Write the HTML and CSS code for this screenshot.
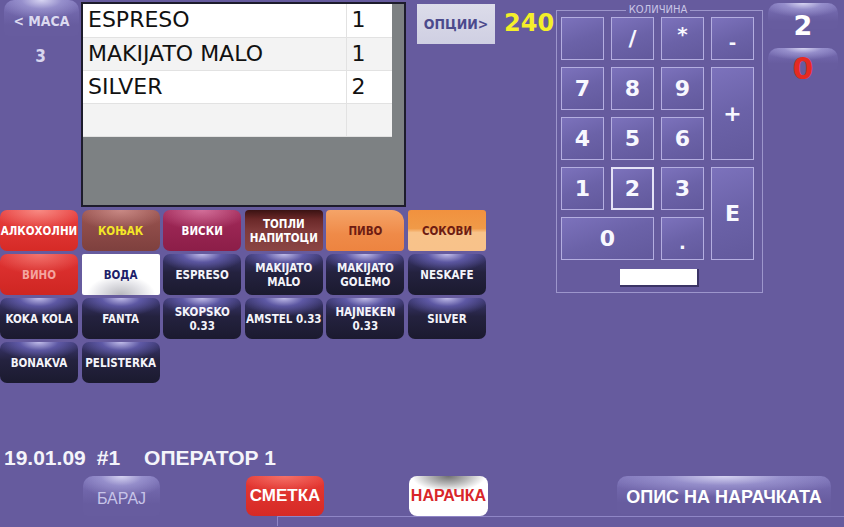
FILE: index.html
```html
<!DOCTYPE html>
<html>
<head>
<meta charset="utf-8">
<link rel="stylesheet" href="styles.css">
</head>
<body>
<div class="app">
  <div class="main">
    <div class="left-area">
      <div class="top-row">
        <div class="side">
          <div class="gloss-btn maca">&lt; MACA</div>
          <div class="table-no">3</div>
        </div>
        <div class="order">
          <table class="order-table">
            <tr><td class="name">ESPRESO</td><td class="qty">1</td></tr>
            <tr><td class="name">MAKIJATO MALO</td><td class="qty">1</td></tr>
            <tr><td class="name">SILVER</td><td class="qty">2</td></tr>
            <tr><td class="name"></td><td class="qty"></td></tr>
          </table>
        </div>
        <div class="opts">
          <div class="opts-btn">ОПЦИИ&gt;</div>
          <div class="total">240</div>
        </div>
      </div>
      <div class="grid">
        <div class="btn cat red">АЛКОХОЛНИ</div>
        <div class="btn cat brown">КОЊАК</div>
        <div class="btn cat wine">ВИСКИ</div>
        <div class="btn cat hot">ТОПЛИ<br>НАПИТОЦИ</div>
        <div class="btn cat beer">ПИВО</div>
        <div class="btn cat juice">СОКОВИ</div>
        <div class="btn cat vino">ВИНО</div>
        <div class="btn cat water">ВОДА</div>
        <div class="btn prod">ESPRESO</div>
        <div class="btn prod">MAKIJATO<br>MALO</div>
        <div class="btn prod">MAKIJATO<br>GOLEMO</div>
        <div class="btn prod">NESKAFE</div>
        <div class="btn prod">KOKA KOLA</div>
        <div class="btn prod">FANTA</div>
        <div class="btn prod">SKOPSKO<br>0.33</div>
        <div class="btn prod">AMSTEL 0.33</div>
        <div class="btn prod">HAJNEKEN<br>0.33</div>
        <div class="btn prod">SILVER</div>
        <div class="btn prod">BONAKVA</div>
        <div class="btn prod">PELISTERKA</div>
      </div>
    </div>
    <fieldset class="keypad">
      <legend>КОЛИЧИНА</legend>
      <div class="keys">
        <div class="key"></div>
        <div class="key">/</div>
        <div class="key star">*</div>
        <div class="key small">-</div>
        <div class="key">7</div>
        <div class="key">8</div>
        <div class="key">9</div>
        <div class="key tall">+</div>
        <div class="key">4</div>
        <div class="key">5</div>
        <div class="key">6</div>
        <div class="key">1</div>
        <div class="key sel">2</div>
        <div class="key">3</div>
        <div class="key tall">E</div>
        <div class="key wide">0</div>
        <div class="key small">.</div>
      </div>
      <div class="entry-row"><div class="entry"></div></div>
    </fieldset>
    <div class="displays">
      <div class="gloss-btn disp">2</div>
      <div class="gloss-btn disp red-num">0</div>
    </div>
  </div>
  <div class="info"><span>19.01.09</span><span class="op-no">#1</span><span class="op-name">ОПЕРАТОР 1</span></div>
  <div class="bottom">
    <div class="gloss-btn barai">БАРАЈ</div>
    <div class="smetka">СМЕТКА</div>
    <div class="naracka">НАРАЧКА</div>
    <div class="gloss-btn opis">ОПИС НА НАРАЧКАТА</div>
  </div>
  <div class="strip"></div>
</div>
</body>
</html>
```

FILE: styles.css
```css
* { box-sizing: border-box; }
html, body {
  margin: 0;
  padding: 0;
  width: 844px;
  height: 527px;
  overflow: hidden;
  background: #665b9e;
}
.app {
  width: 844px;
  height: 527px;
  display: flex;
  flex-direction: column;
  font-family: "DejaVu Sans Condensed", "DejaVu Sans", sans-serif;
  color: #fff;
}
.main {
  display: flex;
  height: 440px;
}
.left-area {
  width: 556px;
  display: flex;
  flex-direction: column;
}
.top-row {
  display: flex;
  height: 210px;
}
.side {
  width: 81px;
  display: flex;
  flex-direction: column;
  align-items: center;
}
.gloss-btn {
  background:
    radial-gradient(ellipse 60% 55% at 50% 0%, rgba(220,218,245,0.95) 0%, rgba(170,165,220,0.6) 45%, rgba(120,112,180,0) 100%),
    linear-gradient(#7a70b6, #675c9f 70%);
  border-radius: 10px 10px 4px 4px;
  display: flex;
  align-items: center;
  justify-content: center;
}
.maca {
  width: 75px;
  height: 36px;
  margin-left: 2px;
  font-weight: bold;
  font-size: 14px;
  color: #dcdaf0;
  padding-top: 6px;
}
.table-no {
  margin-top: 10px;
  font-weight: bold;
  font-size: 17px;
  color: #d8d6ee;
}
.order {
  margin-top: 2px;
  width: 325px;
  height: 205px;
  border: 2px solid #1d1c2c;
  background: #7d8183;
  padding-right: 12px;
}
.order-table {
  width: 100%;
  border-collapse: collapse;
  font-family: "DejaVu Sans", sans-serif;
  font-size: 22px;
  color: #111;
}
.order-table td {
  height: 33px;
  padding: 0 0 0 5px;
  border-bottom: 1px solid #e2e2e2;
  background: #fff;
  line-height: 1;
}
.order-table tr:nth-child(2) td,
.order-table tr:nth-child(4) td { background: #f3f3f3; }
.order-table td.qty {
  width: 46px;
  border-left: 1px solid #e2e2e2;
}
.opts {
  display: flex;
  align-items: flex-start;
  margin-left: 11px;
}
.opts-btn {
  margin-top: 4px;
  width: 78px;
  height: 40px;
  background: linear-gradient(#dcdcea, #cfcfe2);
  color: #4c4a8c;
  font-weight: bold;
  font-size: 14px;
  display: flex;
  align-items: center;
  justify-content: center;
}
.total {
  margin-left: 9px;
  margin-top: 9px;
  font-family: "DejaVu Sans", sans-serif;
  font-weight: bold;
  font-size: 24px;
  color: #f4ef2a;
}
.grid {
  display: grid;
  grid-template-columns: repeat(6, 78px);
  grid-auto-rows: 41px;
  column-gap: 3.6px;
  row-gap: 3px;
}
.btn {
  display: flex;
  align-items: center;
  justify-content: center;
  text-align: center;
  font-weight: bold;
  font-size: 11.5px;
  line-height: 1.2;
  border-radius: 7px;
  padding-top: 3px;
}
.prod {
  background:
    radial-gradient(ellipse 55% 45% at 50% 0%, rgba(200,196,240,0.95) 0%, rgba(110,104,190,0.7) 45%, rgba(60,56,120,0) 100%),
    linear-gradient(#3c3872 0%, #24223f 45%, #1b1a2f 100%);
  color: #f4f4fa;
}
.cat { color: #fff; }
.red {
  background:
    radial-gradient(ellipse 60% 50% at 50% 0%, rgba(255,170,160,0.7), rgba(255,120,110,0) 100%),
    linear-gradient(#e84040, #d62a26);
}
.brown {
  background:
    radial-gradient(ellipse 60% 50% at 50% 0%, rgba(220,160,155,0.7), rgba(200,140,140,0) 100%),
    linear-gradient(#9a5450, #7e403e);
  color: #f3e628;
}
.wine {
  background:
    radial-gradient(ellipse 60% 50% at 50% 0%, rgba(230,140,180,0.7), rgba(200,100,140,0) 100%),
    linear-gradient(#a32a5a, #8c1e48);
}
.hot {
  background: linear-gradient(#3a1212 0%, #6a2828 22%, #7f3a3a 50%, #8a4544 100%);
  border-radius: 4px;
}
.beer {
  background: linear-gradient(#f5a468, #ef8a48 60%, #ed8440);
  color: #6e1c12;
  border-radius: 4px 12px 4px 4px;
}
.juice {
  background: linear-gradient(#f1913e 0%, #f09a48 45%, #f8c38a 55%, #f8c28a 100%);
  color: #6e1c12;
  border-radius: 3px;
}
.vino {
  background:
    radial-gradient(ellipse 60% 50% at 50% 0%, rgba(255,160,150,0.6), rgba(255,120,110,0) 100%),
    linear-gradient(#e03434, #cf2622);
  color: #f4a5a0;
}
.water {
  background: radial-gradient(ellipse 55% 60% at 50% 100%, #b8b8be 0%, #e8e8ec 55%, #ffffff 80%);
  color: #1e1f6a;
  border-radius: 2px;
}
.keypad {
  margin: 5px 0 0 0;
  padding: 1px 7px 4px 4px;
  width: 207px;
  height: 288px;
  border: 1px solid #9d96cc;
  min-width: 0;
}
.keypad legend {
  margin: 0 auto;
  padding: 0 3px;
  font-family: "DejaVu Sans", sans-serif;
  font-size: 10px;
  line-height: 10px;
  color: #c9c5e6;
}
.keys {
  margin-top: 1px;
  display: grid;
  grid-template-columns: repeat(4, 43px);
  grid-auto-rows: 43px;
  gap: 7px;
}
.key {
  border: 1px solid #b4aee0;
  background: linear-gradient(160deg, #7c72bc 0%, #6b62a8 50%, #62599c 100%);
  display: flex;
  align-items: center;
  justify-content: center;
  font-family: "DejaVu Sans", sans-serif;
  font-weight: bold;
  font-size: 22px;
  color: #f8f8ff;
}
.key.star { align-items: flex-start; padding-top: 4px; font-size: 20px; }
.key.small { font-size: 18px; padding-top: 8px; }
.key.tall { grid-row: span 2; }
.key.wide { grid-column: span 2; }
.key.sel { border: 2px solid #e4e2f6; }
.entry-row {
  display: flex;
  justify-content: center;
  margin-top: 9px;
  padding-left: 2px;
}
.entry {
  width: 79px;
  height: 18px;
  background: #fff;
  border-right: 2px solid #3b3466;
  border-bottom: 2px solid #3b3466;
}
.displays {
  margin-left: 5px;
  display: flex;
  flex-direction: column;
}
.disp {
  margin-top: 3px;
  width: 70px;
  height: 26px;
  font-family: "DejaVu Sans", sans-serif;
  font-weight: bold;
  font-size: 27px;
  line-height: 27px;
  align-items: flex-start;
  padding-top: 9px;
  overflow: visible;
}
.disp.red-num {
  margin-top: 19px;
  color: #e62a22;
  font-size: 30px;
  line-height: 30px;
  padding-top: 6px;
  height: 22px;
}
.info {
  margin-top: 5px;
  padding-left: 4px;
  height: 26px;
  display: flex;
  align-items: center;
  font-family: "Liberation Sans Narrow", "Liberation Sans", sans-serif;
  font-weight: bold;
  font-size: 21px;
  color: #f4f4fa;
}
.op-no { margin-left: 11px; }
.op-name { margin-left: 24px; }
.bottom {
  display: flex;
  align-items: flex-start;
  height: 45px;
  padding-top: 5px;
}
.barai {
  margin-left: 83px;
  width: 77px;
  height: 40px;
  font-family: "Liberation Sans Narrow", "Liberation Sans", sans-serif;
  font-size: 16px;
  color: #c7c4e8;
  padding-top: 6px;
}
.smetka {
  margin-left: 86px;
  width: 78px;
  height: 40px;
  border-radius: 8px;
  background:
    radial-gradient(ellipse 60% 40% at 50% 0%, rgba(255,150,140,0.6), rgba(255,120,110,0) 100%),
    linear-gradient(#e63a34, #d62a26);
  display: flex;
  align-items: center;
  justify-content: center;
  font-family: "Liberation Sans Narrow", "Liberation Sans", sans-serif;
  font-weight: bold;
  font-size: 17px;
  color: #fff;
}
.naracka {
  margin-left: 85px;
  width: 79px;
  height: 40px;
  border-radius: 8px;
  background: radial-gradient(ellipse 55% 45% at 50% 0%, #707070 0%, #b8b8b8 45%, #ffffff 85%);
  display: flex;
  align-items: center;
  justify-content: center;
  font-family: "Liberation Sans Narrow", "Liberation Sans", sans-serif;
  font-weight: bold;
  font-size: 16px;
  color: #d8262a;
}
.opis {
  margin-left: 129px;
  width: 214px;
  height: 38px;
  font-family: "Liberation Sans Narrow", "Liberation Sans", sans-serif;
  font-weight: bold;
  font-size: 18px;
  color: #fff;
  padding-top: 4px;
}
.strip {
  margin-left: 277px;
  margin-top: 0;
  height: 10px;
  border-top: 1px solid #8f86c6;
  border-left: 1px solid #8f86c6;
}
```
